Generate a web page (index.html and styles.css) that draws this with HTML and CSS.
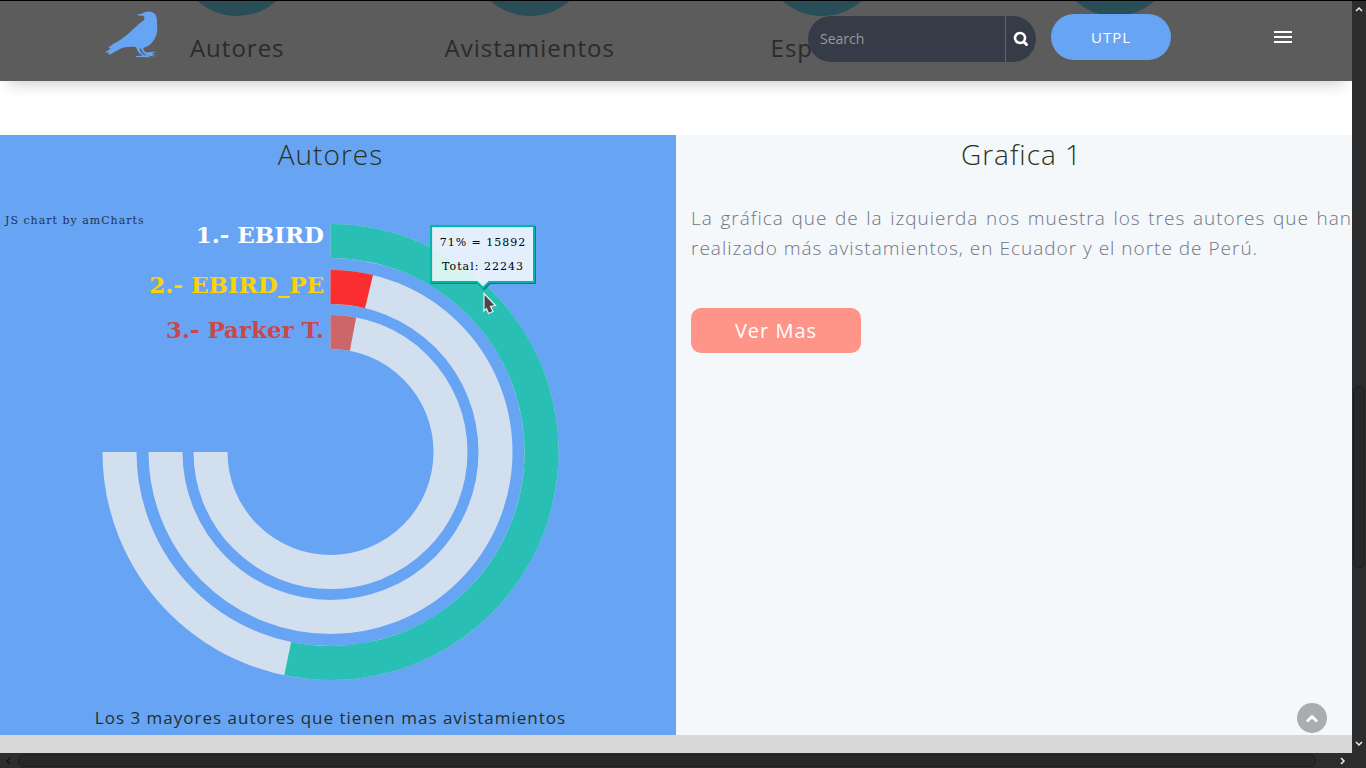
FILE: index.html
```html
<!DOCTYPE html>
<html lang="es">
<head>
<meta charset="utf-8">
<title>Autores</title>
<link rel="stylesheet" href="styles.css">
</head>
<body>
<div class="window">
  <div class="page">
    <header class="topbar">
      <a class="logo" href="#" aria-label="Inicio">
        <svg width="54" height="48" viewBox="0 0 54 48" fill="#68a4f4" aria-hidden="true">
          <path d="M32 3.600C35 3 37 2.600 39 1.500C42 -.2 47 0 50 3C52 5.500 52 9 52 13C53 20 52 26 47 31.500C45 34 42 36 39 36.500L38 38.500L41 41.500L51 40.500L47 42.500L52 44L46 43.500L50 45.500L42 44.500L46 46.200L33 46L30 46.500L32 45L38 44.500L34 42L32 38.500L31 36C24 35.500 18 36 15 38L5 43.500L3 43L4 41.500L0 41.500L6 37.500L3 37L8 33C20 28 28 17 39 9C40 6 39 5 37 4.500C35 5.300 33 4.500 32 3.600Z"/>
          <path d="M34.500 37.500L36 37.500L38 41.500L42 44.500L39 44L36 41.500Z" fill="#5c5c5c"/>
        </svg>
      </a>
      <form class="search">
        <input class="search-input" type="text" placeholder="Search" aria-label="Search">
        <button class="search-button" type="button" aria-label="Buscar">
          <svg width="16" height="16" viewBox="0 0 16 16" fill="none" stroke="#fff" stroke-linecap="round" aria-hidden="true"><circle cx="7" cy="7" r="5" stroke-width="2.600"/><path d="M11 11L13.500 13.500" stroke-width="3"/></svg>
        </button>
      </form>
      <a class="utpl" href="#">UTPL</a>
      <button class="menu" type="button" aria-label="Menu"><span></span><span></span><span></span></button>
    </header>

    <main>
      <section class="stats">
        <div class="stat"><div class="disc"></div><h3>Autores</h3></div>
        <div class="stat"><div class="disc"></div><h3>Avistamientos</h3></div>
        <div class="stat"><div class="disc"></div><h3>Especies</h3></div>
        <div class="stat"><div class="disc"></div></div>
      </section>

      <section class="panels">
        <div class="panel panel-chart">
          <h2>Autores</h2>
          <svg class="chart" viewBox="0 0 661 512" role="img" aria-label="Autores con mas avistamientos">
            <a href="#"><text class="credit" x="5" y="34">JS chart by amCharts</text></a>
            <g transform="translate(330.500 262)" fill="none" stroke-width="34">
              <g stroke="#d2dfee">
                <path d="M0 -211A211 211 0 1 1 -211 0"/>
                <path d="M0 -165A165 165 0 1 1 -165 0"/>
                <path d="M0 -120A120 120 0 1 1 -120 0"/>
              </g>
              <path d="M0 -211A211 211 0 1 1 -42.800 206.600" stroke="#2abfb5"/>
              <path d="M0 -165A165 165 0 0 1 38.500 -160.400" stroke="#fa2d2f"/>
              <path d="M0 -120A120 120 0 0 1 22.500 -117.900" stroke="#cd666a"/>
            </g>
            <g class="labels">
              <text x="324" y="53" fill="#fff">1.- EBIRD</text>
              <text x="324" y="103" fill="#fdd400">2.- EBIRD_PE</text>
              <text x="324" y="148" fill="#cc4748">3.- Parker T.</text>
            </g>
            <path d="M432 37H535V93H490L484 99L478 93H432Z" fill="none" stroke="#176f83" stroke-width="2"/>
            <path d="M431 36H534V92H489L483 98L477 92H431Z" fill="#fff" fill-opacity=".82" stroke="#00b8a5" stroke-width="2"/>
            <g class="balloon">
              <text x="483" y="56">71% = 15892</text>
              <text x="483" y="80">Total: 22243</text>
            </g>
            <path d="M484 103.500L495.500 115.500L490.500 116.500L493 121.500L488.500 123.500L486.500 118.500L484 121Z" fill="#484848" stroke="#eee" stroke-width="1.200"/>
          </svg>
          <p class="caption">Los 3 mayores autores que tienen mas avistamientos</p>
        </div>
        <div class="panel panel-text">
          <h2>Grafica 1</h2>
          <p class="copy">La gráfica que de la izquierda nos muestra los tres autores que han realizado más avistamientos, en Ecuador y el norte de Perú.</p>
          <a class="more" href="#">Ver Mas</a>
        </div>
      </section>
    </main>

    <button class="to-top" type="button" aria-label="Subir">
      <svg width="14" height="10" viewBox="0 0 14 10" fill="none" stroke="#fff" stroke-width="3" aria-hidden="true"><path d="M2 8.500L7 3.500L12 8.500"/></svg>
    </button>
  </div>

  <div class="scroll-v" aria-hidden="true">
    <svg width="8" height="16" viewBox="0 0 8 16" fill="none" stroke="#eee" stroke-width="1.500"><path d="M1 10L4 7L7 10"/></svg>
    <div class="track-v"><i class="gap-before-v"></i><i class="thumb-v"></i><i class="gap-after-v"></i></div>
    <svg width="8" height="18" viewBox="0 0 8 18" fill="none" stroke="#eee" stroke-width="1.500"><path d="M1 7L4 10L7 7"/></svg>
  </div>
  <div class="scroll-h" aria-hidden="true">
    <svg width="18" height="8" viewBox="0 0 18 8" fill="none" stroke="#151515" stroke-width="1.500"><path d="M10 1L7 4L10 7"/></svg>
    <div class="thumb-h"></div>
    <svg width="32" height="8" viewBox="0 0 32 8" fill="none" stroke="#eee" stroke-width="1.500"><path d="M7 1L10 4L7 7"/></svg>
  </div>
</div>
</body>
</html>
```
FILE: styles.css
```css
* { box-sizing: border-box; }

body {
  margin: 0;
  font-family: "Open Sans", sans-serif;
  letter-spacing: 1px;
}

h2, h3, p { margin: 0; }
a { text-decoration: none; }

button {
  border: 0;
  padding: 0;
  background: none;
  cursor: pointer;
}

.window {
  display: grid;
  grid-template-columns: 1fr 14px;
  grid-template-rows: 1fr 15px;
  height: 100vh;
  border-top: 1px solid #000;
  background: #2d2d2d;
}

.page {
  position: relative;
  overflow: hidden;
  background: #d8d8d8;
}

.topbar {
  position: absolute;
  top: 0;
  left: 0;
  right: 0;
  z-index: 2;
  display: flex;
  align-items: flex-start;
  height: 80px;
  padding: 0 60px 0 105px;
  background: rgba(0, 0, 0, .64);
  box-shadow: 0 8px 16px -8px rgba(0, 0, 0, .27);
}

.logo {
  display: flex;
  margin: 10px auto 0 0;
}

.search {
  display: flex;
  width: 228px;
  height: 46px;
  margin-top: 15px;
  border-radius: 23px;
  overflow: hidden;
  background: #353c48;
}

.search-input {
  flex: 1;
  min-width: 0;
  border: 0;
  border-right: 1px solid #626469;
  padding: 0 12px 2px;
  background: transparent;
  color: #fff;
  font: 14px "Open Sans", sans-serif;
}

.search-input::placeholder { color: #999; }

.search-button {
  display: flex;
  align-items: center;
  justify-content: center;
  width: 30px;
}

.utpl {
  width: 120px;
  margin: 13px 103px 0 15px;
  border-radius: 23px;
  background: #68a4f4;
  color: #fff;
  font-size: 15px;
  line-height: 46px;
  text-align: center;
}

.menu {
  display: grid;
  gap: 3px;
  width: 18px;
  margin-top: 30px;
}

.menu span {
  height: 2px;
  background: #fff;
}

.stats {
  display: grid;
  grid-template-columns: repeat(4, 1fr);
  padding: 0 91px 72px;
  margin-top: -105px;
  background: #fff;
}

.disc {
  width: 120px;
  height: 120px;
  margin: 0 auto 17px;
  border-radius: 50%;
  background: #72d9f2;
}

.stats h3 {
  color: #777;
  font-size: 24px;
  font-weight: 400;
  line-height: 30px;
  text-align: center;
}

.panels {
  display: grid;
  grid-template-columns: 1fr 1fr;
}

.panel h2 {
  margin-bottom: 17px;
  color: #2b3319;
  font-size: 28px;
  font-weight: 300;
  line-height: 38px;
  text-align: center;
}

.panel-chart {
  padding-right: 15px;
  background: #68a4f4;
}

.panel-text {
  padding-left: 15px;
  background: #f4f8fb;
}

.chart {
  display: block;
  width: 100%;
  height: 512px;
  font-family: "DejaVu Serif", serif;
}

.credit {
  fill: #000;
  font-size: 11px;
  opacity: .7;
}

.labels {
  font-size: 23px;
  font-weight: 700;
  letter-spacing: 0;
  text-anchor: end;
}

.balloon {
  fill: #000;
  font-size: 11px;
  text-anchor: middle;
}

.caption {
  padding-bottom: 2px;
  color: #20302c;
  font-size: 17px;
  line-height: 31px;
  text-align: center;
}

.copy {
  margin: 30px 0 45px;
  color: #717583;
  font-size: 19px;
  font-weight: 300;
  line-height: 30px;
  text-align: justify;
}

.more {
  display: inline-block;
  width: 170px;
  border-radius: 10px;
  background: #ff9488;
  color: #fff;
  font-size: 20px;
  line-height: 45px;
  text-align: center;
}

.to-top {
  position: absolute;
  right: 25px;
  bottom: 20px;
  display: flex;
  align-items: center;
  justify-content: center;
  width: 30px;
  height: 30px;
  border-radius: 50%;
  background: #a9adaf;
}

.scroll-v {
  display: flex;
  flex-direction: column;
  align-items: center;
}

.track-v {
  display: flex;
  flex: 1;
  flex-direction: column;
  width: 12px;
}

.gap-before-v { flex: 370; }
.gap-after-v { flex: 167; }

.thumb-v {
  flex: 180;
  border: 1px solid #1e1e1e;
  border-radius: 6px;
  background: #282828;
}

.scroll-h {
  grid-column: 1 / -1;
  display: flex;
  align-items: center;
}

.thumb-h {
  flex: 1;
  height: 13px;
  margin-right: 18px;
  border: 1px solid #1e1e1e;
  border-radius: 6px;
  background: #282828;
}
```
